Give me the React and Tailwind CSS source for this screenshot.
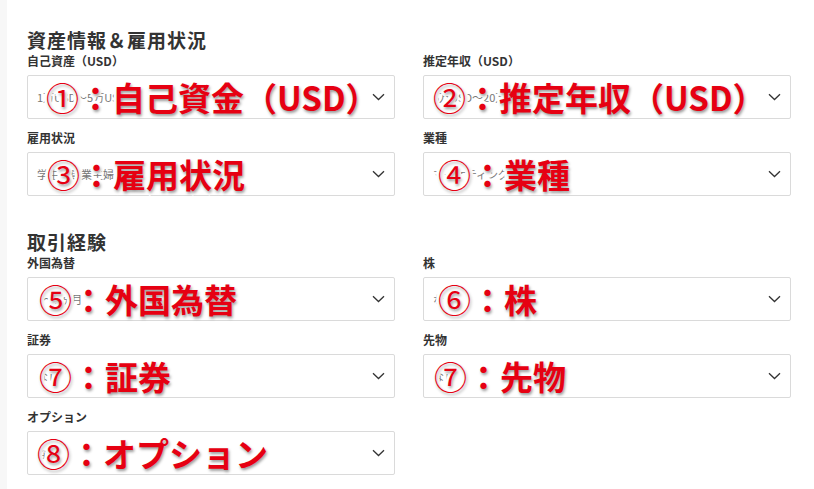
import React from "react";

const sections = [
  {
    title: "資産情報＆雇用状況",
    spacing: "mt-0",
    fields: [
      { label: "自己資産（USD）", value: "1万USD～5万USD", num: "①", note: "：自己資金（USD）", pos: "left-[18px]" },
      { label: "推定年収（USD）", value: "5万USD～20万USD", num: "②", note: "：推定年収（USD）", pos: "left-[9px]" },
      { label: "雇用状況", value: "学生／専業主婦", num: "③", note: "：雇用状況", pos: "left-[19px]" },
      { label: "業種", value: "マーケティング", num: "④", note: "：業種", pos: "left-[14px]" },
    ],
  },
  {
    title: "取引経験",
    spacing: "mt-[34px]",
    fields: [
      { label: "外国為替", value: "1～6ヶ月", num: "⑤", note: "：外国為替", pos: "left-[11px]" },
      { label: "株", value: "なし", num: "⑥", note: "：株", pos: "left-[14px]" },
      { label: "証券", value: "なし", num: "⑦", note: "：証券", pos: "left-[11px]" },
      { label: "先物", value: "なし", num: "⑦", note: "：先物", pos: "left-[10px]" },
      { label: "オプション", value: "なし", num: "⑧", note: "：オプション", pos: "left-[9px]" },
    ],
  },
];

function Chevron() {
  return (
    <svg width="13" height="8" viewBox="0 0 13 8" fill="none">
      <path d="M1 1.2l5.5 5.3L12 1.2" stroke="#333" strokeWidth="1.3" />
    </svg>
  );
}

function Field({ field }) {
  return (
    <div>
      <div className="h-[14px] leading-[14px] text-[12px] font-semibold text-[#333] mb-[7px]">
        {field.label}
      </div>
      <div className="relative h-[44px] bg-white border border-[#dadada] rounded-[2px] flex items-center justify-between pl-[9px] pr-[9px]">
        <span className="text-[11px] text-[#777]">{field.value}</span>
        <Chevron />
        {/* annotation overlay */}
        <span
          className={
            "absolute top-1/2 -translate-y-1/2 whitespace-nowrap text-[33px] leading-none font-bold text-[#e60012] [-webkit-text-stroke:6px_#ffffff] [paint-order:stroke_fill] [text-shadow:1px_2px_3px_rgba(0,0,0,0.4)] " +
            field.pos
          }
        >
          <span className="font-normal">{field.num}</span>
          {field.note}
        </span>
      </div>
    </div>
  );
}

export default function App() {
  return (
    <div className="w-[814px] h-[489px] bg-white flex overflow-hidden font-['Noto_Sans_CJK_JP','Noto_Sans',sans-serif]">
      <div className="w-[7px] bg-[#f7f7f7]"></div>
      <div className="w-[764px] pl-[20px] pt-[28px] box-content">
        {sections.map((section) => (
          <div key={section.title} className={section.spacing}>
            <div className="h-[24px] leading-[24px] text-[19px] font-bold tracking-[1px] text-[#333]">
              {section.title}
            </div>
            <div className="grid grid-cols-2 gap-x-[28px] gap-y-[12px] mt-[2px]">
              {section.fields.map((field) => (
                <Field key={field.label} field={field} />
              ))}
            </div>
          </div>
        ))}
      </div>
    </div>
  );
}
